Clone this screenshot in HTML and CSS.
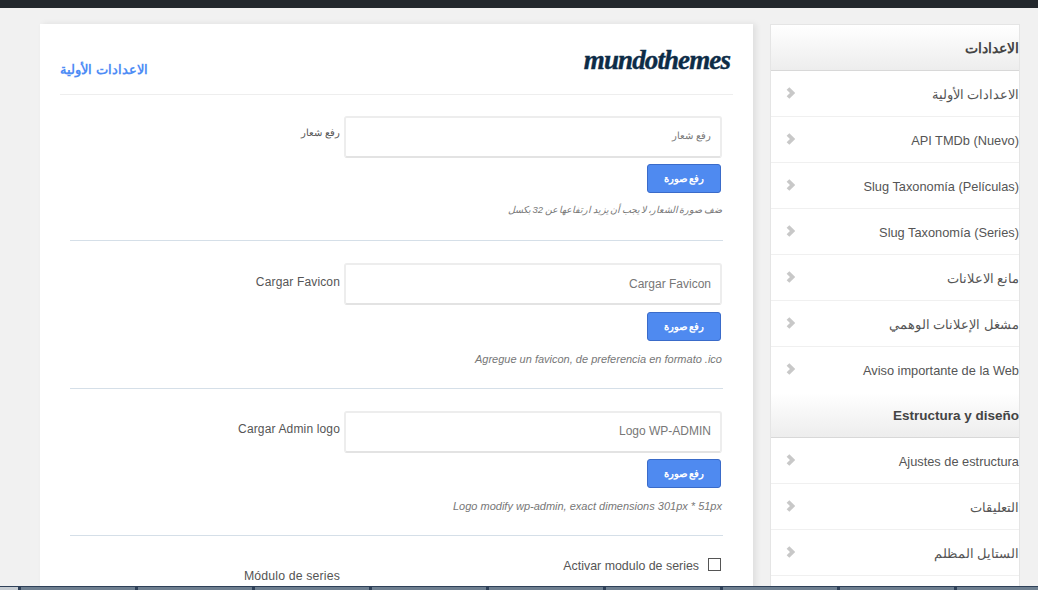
FILE: index.html
```html
<!DOCTYPE html>
<html lang="es">
<head>
<meta charset="utf-8">
<title>Opciones</title>
<link rel="stylesheet" href="styles.css">
</head>
<body>
<div class="topbar"></div>
<div class="stage">
  <main class="panel">
    <header class="head">
      <h1 class="title" dir="rtl">الاعدادات الأولية</h1>
      <div class="logo">mundothemes</div>
    </header>
    <section class="row">
      <label class="lbl ar" dir="rtl">رفع شعار</label>
      <div class="ctl">
        <div class="input ar" dir="rtl">رفع شعار</div>
        <button class="btn" dir="rtl">رفع صورة</button>
        <p class="hint hint-ar" dir="rtl">ضف صورة الشعار، لا يجب أن يزيد ارتفاعها عن 32 بكسل</p>
      </div>
    </section>
    <section class="row">
      <label class="lbl">Cargar Favicon</label>
      <div class="ctl">
        <div class="input">Cargar Favicon</div>
        <button class="btn" dir="rtl">رفع صورة</button>
        <p class="hint">Agregue un favicon, de preferencia en formato .ico</p>
      </div>
    </section>
    <section class="row">
      <label class="lbl">Cargar Admin logo</label>
      <div class="ctl">
        <div class="input">Logo WP-ADMIN</div>
        <button class="btn" dir="rtl">رفع صورة</button>
        <p class="hint">Logo modify wp-admin, exact dimensions 301px * 51px</p>
      </div>
    </section>
    <section class="row last">
      <label class="lbl lbl-low">Módulo de series</label>
      <div class="ctl">
        <div class="check"><span>Activar modulo de series</span><i class="box"></i></div>
      </div>
    </section>
  </main>
  <aside class="side">
    <h2 class="cap cap-first" dir="rtl">الاعدادات</h2>
    <ul class="menu">
      <li><svg class="chev" viewBox="0 0 9 12"><path d="M2 1.500 6.500 6 2 10.500"/></svg><span class="m-ar" dir="rtl">الاعدادات الأولية</span></li>
      <li><svg class="chev" viewBox="0 0 9 12"><path d="M2 1.500 6.500 6 2 10.500"/></svg><span>API TMDb (Nuevo)</span></li>
      <li><svg class="chev" viewBox="0 0 9 12"><path d="M2 1.500 6.500 6 2 10.500"/></svg><span>Slug Taxonomía (Películas)</span></li>
      <li><svg class="chev" viewBox="0 0 9 12"><path d="M2 1.500 6.500 6 2 10.500"/></svg><span>Slug Taxonomía (Series)</span></li>
      <li><svg class="chev" viewBox="0 0 9 12"><path d="M2 1.500 6.500 6 2 10.500"/></svg><span class="m-ar" dir="rtl">مانع الاعلانات</span></li>
      <li><svg class="chev" viewBox="0 0 9 12"><path d="M2 1.500 6.500 6 2 10.500"/></svg><span class="m-ar" dir="rtl">مشغل الإعلانات الوهمي</span></li>
      <li class="noline"><svg class="chev" viewBox="0 0 9 12"><path d="M2 1.500 6.500 6 2 10.500"/></svg><span>Aviso importante de la Web</span></li>
    </ul>
    <h2 class="cap">Estructura y diseño</h2>
    <ul class="menu">
      <li><svg class="chev" viewBox="0 0 9 12"><path d="M2 1.500 6.500 6 2 10.500"/></svg><span>Ajustes de estructura</span></li>
      <li><svg class="chev" viewBox="0 0 9 12"><path d="M2 1.500 6.500 6 2 10.500"/></svg><span class="m-ar" dir="rtl">التعليقات</span></li>
      <li><svg class="chev" viewBox="0 0 9 12"><path d="M2 1.500 6.500 6 2 10.500"/></svg><span class="m-ar" dir="rtl">الستايل المظلم</span></li>
    </ul>
  </aside>
</div>
<div class="taskbar">
  <b class="start"></b><b class="task"></b><b class="task"></b><b class="task"></b><b class="task"></b><b class="task"></b><b class="task"></b><b class="task"></b><b class="task"></b><b class="task"></b>
</div>
</body>
</html>
```
FILE: styles.css
```css
* { box-sizing: border-box; }
html, body { margin: 0; height: 590px; overflow: hidden; }
body {
  position: relative;
  background: #f1f1f1;
  font-family: "Liberation Sans", "Noto Sans", sans-serif;
  font-size: 12px;
  color: #555;
}
.topbar { height: 8px; background: #23282d; }
.stage { display: flex; align-items: flex-start; height: 582px; overflow: hidden; padding: 16px 0 0 40px; gap: 17px; }
.panel {
  width: 713px;
  height: 566px;
  overflow: hidden;
  background: #fff;
  box-shadow: 3px 0 6px rgba(0, 0, 0, .08);
  padding: 0 20px;
  flex: none;
}
.head {
  height: 71px;
  display: flex;
  justify-content: space-between;
  border-bottom: 1px solid #eee;
}
.title {
  margin: 37px 0 0;
  font-size: 13.4px;
  font-weight: 700;
  color: #4f8df5;
  line-height: 18px;
}
.logo {
  margin: 19px 3px 0 0;
  font: italic 700 27px/34px "Liberation Serif", serif;
  letter-spacing: -.9px;
  -webkit-text-stroke: .4px #0d2c47;
  color: #0d2c47;
}
.row {
  margin: 0 10px;
  padding: 22px 0 0;
  height: 147px;
  display: flex;
  border-bottom: 1px solid #d5dfe8;
  justify-content: flex-end;
  gap: 4px;
}
.row:nth-of-type(1) { height: 146px; padding-top: 21px; }
.row:nth-of-type(2) { height: 148px; }
.row.last { border: 0; }
.lbl { flex: 1; text-align: right; color: #555; padding-top: 11px; line-height: 14px; letter-spacing: .15px; }
.row:nth-of-type(1) .lbl { padding-top: 10px; }
.row:nth-of-type(2) .lbl { padding-top: 12px; }
.lbl-low { font-size: 12.3px; }
.ar { font-size: 10px; }
.ctl { width: 379px; flex: none; display: flex; flex-direction: column; align-items: flex-end; }
.input {
  width: 378px;
  height: 42px;
  align-self: flex-start;
  border: 2px solid #ededed;
  border-radius: 3px;
  border-bottom-color: #e3e3e3;
  padding: 0 9px;
  line-height: 36px;
  color: #777;
  text-align: right;
}
.row:nth-of-type(2) .input { line-height: 38px; }
.input[dir="rtl"] { text-align: right; line-height: 36px; }
.btn {
  width: 74px;
  height: 29px;
  margin: 6px 2px 0 0;
  padding: 0;
  border: 1px solid #3a6bc9;
  border-radius: 3px;
  background: #4f8af0;
  color: #fff;
  font: 700 10px/26px "Liberation Sans", sans-serif;
}
.row:nth-of-type(2) .btn { margin-top: 7px; }
.hint {
  margin: 11px 0 0;
  padding-right: 1px;
  font-size: 11px;
  font-style: italic;
  line-height: 14px;
  color: #777;
}
.hint-ar { font-size: 9.5px; margin-top: 10px; word-spacing: -1.1px; }
.check { display: flex; align-items: flex-start; gap: 9px; line-height: 14px; margin-right: 2px; }
.check span { font-size: 12.4px; padding-top: 1px; }
.box { width: 13px; height: 13px; border: 1px solid #555; background: #fff; display: block; }
.side {
  width: 249px;
  height: 566px;
  overflow: hidden;
  flex: none;
  border: 1px solid #e5e5e5;
  border-width: 1px 0 0 1px;
  background: #fff;
  box-shadow: 1px 0 0 #e5e5e5;
}
.cap {
  margin: 0;
  height: 45px;
  padding-top: 14px;
  background: linear-gradient(#fff 0%, #ededed 100%);
  border-bottom: 1px solid #d8d8d8;
  font-size: 13.5px;
  font-weight: 700;
  line-height: 18px;
  color: #444;
  text-align: right;
}
.cap-first { height: 46px; padding-top: 15px; }
.menu { margin: 0; padding: 0; list-style: none; }
.menu li {
  height: 46px;
  display: flex;
  justify-content: space-between;
  padding: 16px 0 0 15px;
  border-bottom: 1px solid #f0f0f0;
  line-height: 15px;
  font-size: 12.8px;
  color: #555;
}
.m-ar { font-size: 12.6px; margin-top: 1px; }
.menu li.noline { border: 0; }
.chev { width: 9px; height: 12px; fill: none; stroke: #c8c8c8; stroke-width: 3.8; flex: none; }
.taskbar {
  position: absolute;
  left: 0;
  right: 0;
  bottom: 0;
  height: 4px;
  overflow: hidden;
  background: #2e4058;
  display: flex;
  gap: 3px;
  padding-top: 1px;
}
.start { width: 18px; background: #c6ccd2; flex: none; }
.task { width: 114px; flex: none; background: #6e7f90; }
```
